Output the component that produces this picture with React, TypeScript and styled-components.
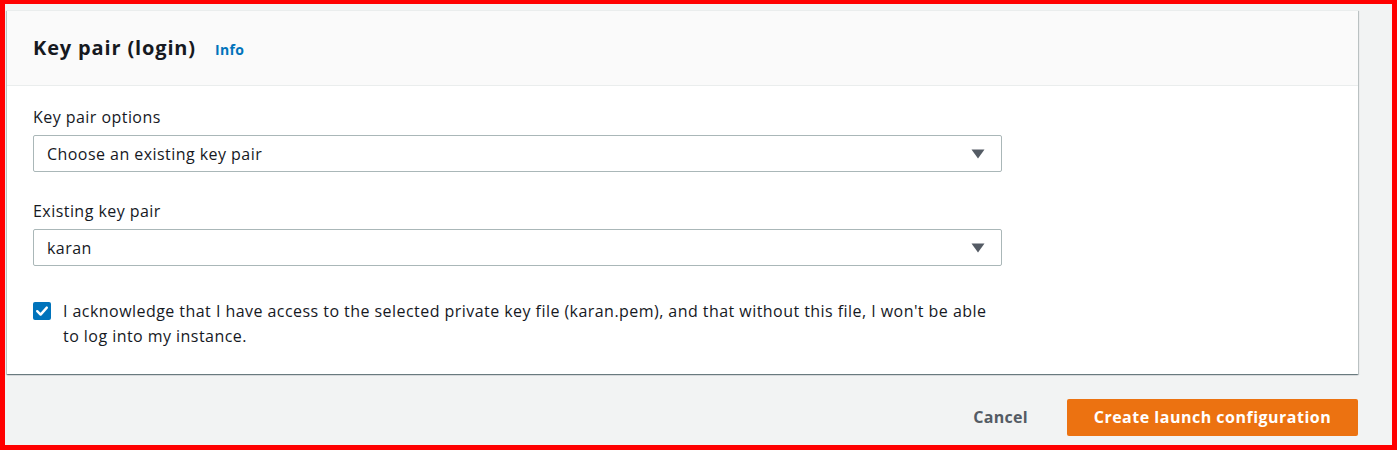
import styled, { createGlobalStyle } from "styled-components";

const GlobalStyle = createGlobalStyle`
    html, body {
        margin: 0;
        padding: 0;
    }
    body {
        font-family: "Open Sans", "Liberation Sans", sans-serif;
        color: #16191f;
        background: #ff0000;
    }
    * {
        box-sizing: border-box;
    }
`;

const CaretIcon = () => (
    <svg width="14" height="10" viewBox="0 0 14 10">
        <path d="M0.5 0.5 H13.5 L7 9.5 Z" fill="#545b64" />
    </svg>
);

const CheckIcon = () => (
    <svg width="18" height="18" viewBox="0 0 18 18">
        <rect x="0" y="0" width="18" height="18" rx="2" fill="#0073bb" />
        <path d="M4.2 9.2 L7.6 12.6 L13.8 5.6" fill="none" stroke="#ffffff" strokeWidth="2.4" strokeLinecap="round" strokeLinejoin="round" />
    </svg>
);

type SelectProps = { value: string };

const Select = ({ value }: SelectProps) => (
    <SelectBox>
        <span>{value}</span>
        <CaretIcon />
    </SelectBox>
);

const App = () => {
    return (
        <>
            <GlobalStyle />
            <Frame>
                <Card>
                    <CardHeader>
                        <h2>Key pair (login)</h2>
                        <a className="info">Info</a>
                    </CardHeader>
                    <CardBody>
                        <Field>
                            <label>Key pair options</label>
                            <Select value="Choose an existing key pair" />
                        </Field>
                        <Field>
                            <label>Existing key pair</label>
                            <Select value="karan" />
                        </Field>
                        <Acknowledge>
                            <div className="box">
                                <CheckIcon />
                            </div>
                            <p>
                                I acknowledge that I have access to the selected private key file (karan.pem), and that
                                without this file, I won't be able to log into my instance.
                            </p>
                        </Acknowledge>
                    </CardBody>
                </Card>
                <Footer>
                    <CancelButton>Cancel</CancelButton>
                    <PrimaryButton>Create launch configuration</PrimaryButton>
                </Footer>
            </Frame>
        </>
    );
};

const Frame = styled.div`
    height: 450px;
    border-style: solid;
    border-color: #ff0000;
    border-width: 4px 5px 5px 5px;
    background: #f2f3f3;
    padding: 6px 34px 0 2px;
    display: flex;
    flex-direction: column;
`;

const Card = styled.section`
    height: 364px;
    background: #ffffff;
    box-shadow: 0 1px 1px 0 rgba(0, 28, 36, 0.35), 1px 1px 1px 0 rgba(0, 28, 36, 0.18),
        -1px 1px 1px 0 rgba(0, 28, 36, 0.18);
    border-top: 1px solid #eaeded;
`;

const CardHeader = styled.header`
    height: 75px;
    background: #fafafa;
    border-bottom: 1px solid #eaeded;
    display: flex;
    align-items: center;
    padding: 0 0 0 26px;
    gap: 19px;

    h2 {
        margin: 0;
        font-size: 20px;
        font-weight: 700;
        letter-spacing: 0.85px;
        color: #16191f;
        line-height: 26px;
    }

    .info {
        font-size: 14px;
        font-weight: 700;
        letter-spacing: 0.3px;
        color: #0073bb;
        cursor: pointer;
        margin-top: 3px;
    }
`;

const CardBody = styled.div`
    padding: 20px 0 0 26px;
    display: flex;
    flex-direction: column;
`;

const Field = styled.div`
    display: flex;
    flex-direction: column;
    width: 969px;
    margin-bottom: 28px;

    label {
        font-size: 16px;
        letter-spacing: 0.45px;
        line-height: 22px;
        margin-bottom: 7px;
        color: #16191f;
    }
`;

const SelectBox = styled.div`
    height: 37px;
    border: 1px solid #aab7b8;
    border-radius: 2px;
    background: #ffffff;
    display: flex;
    align-items: center;
    justify-content: space-between;
    padding: 0 16px 0 13px;
    font-size: 16px;
    letter-spacing: 0.45px;
    color: #16191f;

    svg {
        flex-shrink: 0;
    }
`;

const Acknowledge = styled.div`
    display: flex;
    gap: 12px;
    width: 970px;
    margin-top: 5px;

    .box {
        flex-shrink: 0;
        padding-top: 3px;
    }

    p {
        margin: 0;
        font-size: 16px;
        letter-spacing: 0.45px;
        line-height: 25px;
        color: #16191f;
    }
`;

const Footer = styled.footer`
    flex: 1;
    display: flex;
    justify-content: flex-end;
    align-items: flex-start;
    gap: 39px;
    padding-top: 25px;
`;

const CancelButton = styled.button`
    height: 37px;
    border: none;
    background: transparent;
    font-family: "Open Sans", "Liberation Sans", sans-serif;
    font-size: 16px;
    font-weight: 700;
    letter-spacing: 0.3px;
    color: #545b64;
    padding: 0 0 2px;
    cursor: pointer;
`;

const PrimaryButton = styled.button`
    height: 37px;
    width: 291px;
    border: none;
    border-radius: 2px;
    background: #ec7211;
    color: #ffffff;
    font-family: "Open Sans", "Liberation Sans", sans-serif;
    font-size: 16px;
    font-weight: 700;
    letter-spacing: 0.5px;
    padding: 0 0 2px;
    cursor: pointer;
`;

export default App;
